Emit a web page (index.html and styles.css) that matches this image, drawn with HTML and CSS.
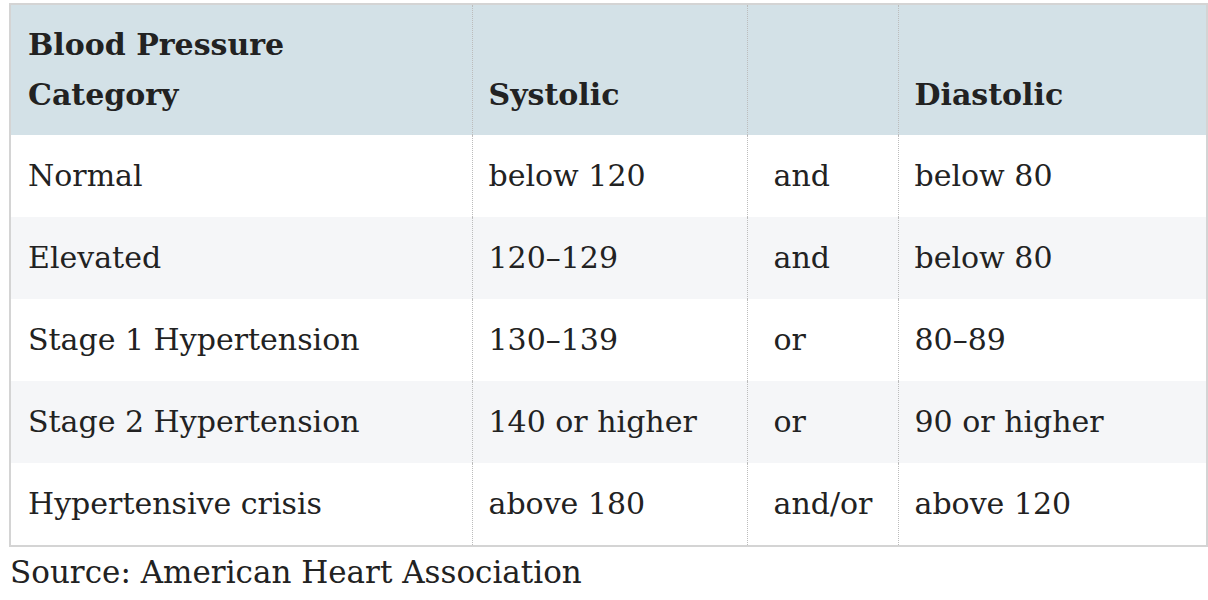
FILE: index.html
```html
<!DOCTYPE html>
<html lang="en">
<head>
<meta charset="utf-8">
<title>Blood Pressure Categories</title>
<link rel="stylesheet" href="styles.css">
</head>
<body>
<table class="bp-table">
  <colgroup>
    <col class="c-cat">
    <col class="c-sys">
    <col class="c-op">
    <col class="c-dia">
  </colgroup>
  <thead>
    <tr>
      <th class="cat">Blood Pressure<br>Category</th>
      <th class="sys">Systolic</th>
      <th class="op"></th>
      <th class="dia">Diastolic</th>
    </tr>
  </thead>
  <tbody>
    <tr>
      <td class="cat">Normal</td>
      <td class="sys">below 120</td>
      <td class="op">and</td>
      <td class="dia">below 80</td>
    </tr>
    <tr>
      <td class="cat">Elevated</td>
      <td class="sys">120–129</td>
      <td class="op">and</td>
      <td class="dia">below 80</td>
    </tr>
    <tr>
      <td class="cat">Stage 1 Hypertension</td>
      <td class="sys">130–139</td>
      <td class="op">or</td>
      <td class="dia">80–89</td>
    </tr>
    <tr>
      <td class="cat">Stage 2 Hypertension</td>
      <td class="sys">140 or higher</td>
      <td class="op">or</td>
      <td class="dia">90 or higher</td>
    </tr>
    <tr>
      <td class="cat">Hypertensive crisis</td>
      <td class="sys">above 180</td>
      <td class="op">and/or</td>
      <td class="dia">above 120</td>
    </tr>
  </tbody>
  <caption class="source">Source: American Heart Association</caption>
</table>
</body>
</html>
```

FILE: styles.css
```css
html, body {
  margin: 0;
  padding: 0;
  background: #ffffff;
}

body {
  font-family: "DejaVu Serif", "Liberation Serif", serif;
  color: #222222;
}

.bp-table {
  margin: 3px 0 0 9px;
  width: 1199px;
  table-layout: fixed;
  border-collapse: collapse;
  border: 2px solid #d4d4d4;
  font-size: 30px;
  line-height: 50px;
}

.c-cat { width: 462px; }
.c-sys { width: 275px; }
.c-op  { width: 151px; }
.c-dia { width: auto; }

.bp-table th,
.bp-table td {
  text-align: left;
  white-space: nowrap;
  border-left: 1px dotted #bcbcbc;
}

.bp-table th.cat,
.bp-table td.cat {
  border-left: none;
}

.bp-table th {
  font-weight: bold;
  vertical-align: bottom;
  padding: 15px 16px;
  background: #d3e1e7;
  height: 100px;
}

.bp-table td {
  padding: 16px 16px;
  height: 50px;
  vertical-align: top;
}

.bp-table .cat { padding-left: 17px; }
.bp-table .op { padding-left: 26px; padding-right: 4px; }

.bp-table tbody tr:nth-child(even) td {
  background: #f5f6f8;
}

.source {
  caption-side: bottom;
  text-align: left;
  font-size: 31px;
  line-height: 44px;
  padding: 3px 0 0 1px;
  color: #222222;
}
```
